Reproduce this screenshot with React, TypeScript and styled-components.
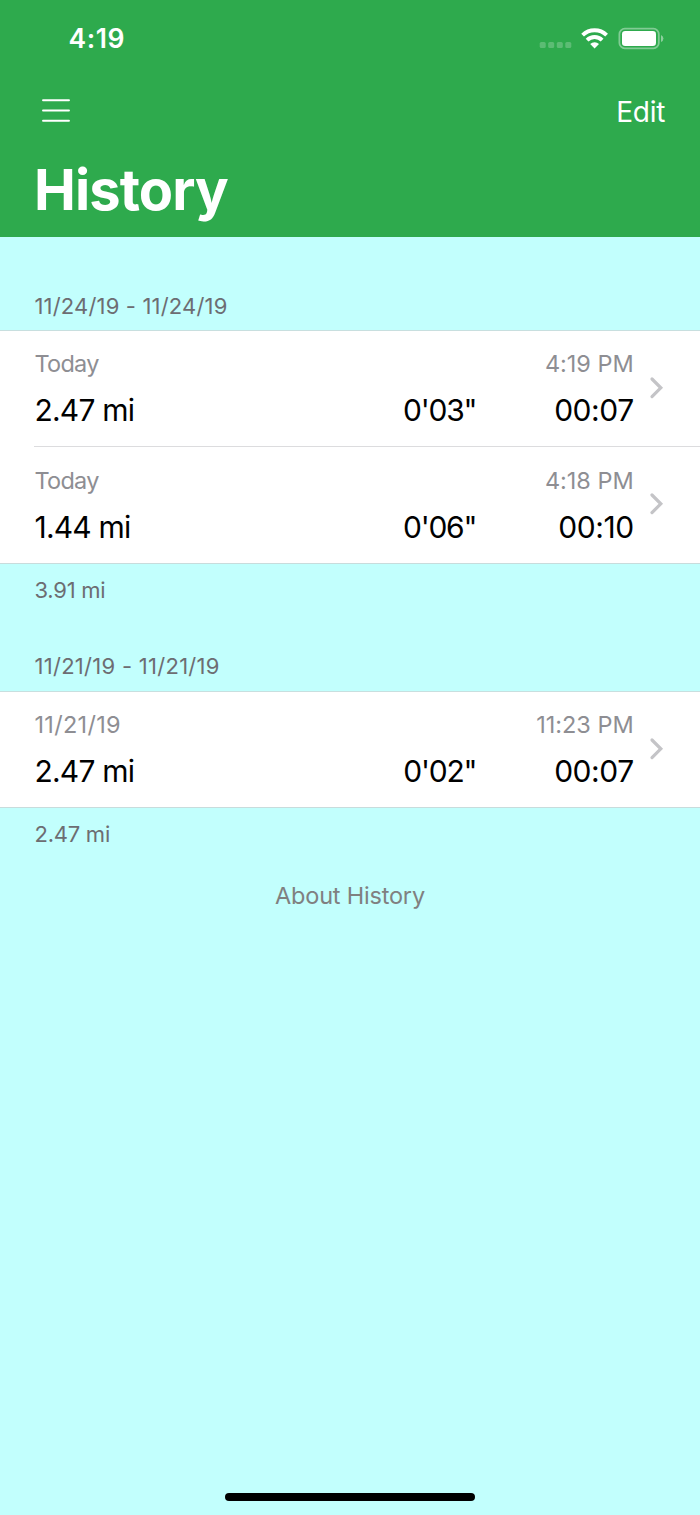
import React from "react";
import styled, { createGlobalStyle } from "styled-components";

const GlobalStyle = createGlobalStyle`
  * { box-sizing: border-box; }
  body { margin: 0; background: #c2fffd; }
`;

const Screen = styled.div`
  display: flex;
  flex-direction: column;
  width: 700px;
  height: 1515px;
  background: #c2fffd;
  font-family: Inter, "Liberation Sans", sans-serif;
  color: #000;
`;

const Header = styled.header`
  height: 237px;
  flex: none;
  background: #2eaa4d;
  color: #fff;
`;

const StatusBar = styled.div`
  display: flex;
  justify-content: space-between;
  height: 76px;
  padding: 0 36px 0 68.5px;
`;

const Clock = styled.span`
  font-size: 26.5px;
  font-weight: 600;
  line-height: 77px;
  letter-spacing: 0.6px;
`;

const StatusIcons = styled.svg`
  display: block;
  width: 126px;
  height: 28px;
  margin-top: 24px;
`;

const NavBar = styled.div`
  display: flex;
  justify-content: space-between;
  align-items: center;
  height: 72px;
  padding: 0 35px 0 42px;
`;

const MenuButton = styled.button`
  width: 28px;
  height: 24px;
  margin: 0 0 2px;
  padding: 0;
  border: 0;
  background: none;
`;

const MenuIcon = styled.svg`
  display: block;
  width: 28px;
  height: 24px;
`;

const EditButton = styled.button`
  padding: 0;
  border: 0;
  background: none;
  color: #fff;
  font: 400 28px/32px Inter, sans-serif;
  letter-spacing: -0.3px;
`;

const Title = styled.h1`
  margin: 0;
  padding-left: 34px;
  font-size: 56px;
  font-weight: 700;
  line-height: 84px;
  letter-spacing: -0.9px;
`;

const Section = styled.section`
  display: flex;
  flex-direction: column;
`;

const SectionHeader = styled.h2<{ $first: boolean }>`
  margin: 0;
  padding: ${(p) => (p.$first ? "55px 0 10px 34.5px" : "48px 0 11px 34.5px")};
  color: #6d6d72;
  font-size: 22px;
  font-weight: 400;
  line-height: 28px;
  letter-spacing: ${(p) => (p.$first ? "0.17px" : "0.28px")};
`;

const SectionFooter = styled.div`
  padding: 12px 0 0 34.5px;
  color: #6d6d72;
  font-size: 22px;
  line-height: 28px;
  letter-spacing: -0.25px;
`;

const Rows = styled.div`
  background: #fff;
  border-top: 1px solid #c8dfdf;
  border-bottom: 1px solid #c8dcdc;
`;

const Row = styled.div`
  display: flex;
  height: 115px;
  padding-left: 34px;

  & + & {
    height: 117px;
  }
`;

const RowBody = styled.div<{ $divided?: boolean }>`
  display: flex;
  flex: 1;
  padding-right: 36px;
  border-top: ${(p) => (p.$divided ? "1px solid #dcdcde" : "0")};
`;

const RowText = styled.div<{ $divided?: boolean }>`
  flex: 1;
  padding: ${(p) => (p.$divided ? "18px" : "17px")} 0 0 0.5px;
`;

const Meta = styled.div`
  display: flex;
  justify-content: space-between;
  height: 32px;
  color: #8e8e93;
  font-size: 23.5px;
  line-height: 32px;
`;

const Day = styled.span<{ $numeric: boolean }>`
  letter-spacing: ${(p) => (p.$numeric ? "0.3px" : "-0.75px")};
`;

const Time = styled.span`
  margin-right: -0.6px;
  letter-spacing: -0.03px;
`;

const Stats = styled.div`
  display: grid;
  grid-template-columns: 1fr 160px 157.5px;
  height: 40px;
  margin: 10px -0.7px 0 0;
  font-size: 30px;
  line-height: 40px;
`;

const Distance = styled.span`
  letter-spacing: -0.8px;
`;

const Pace = styled.span`
  text-align: right;
  letter-spacing: -1.25px;
`;

const Duration = styled.span`
  text-align: right;
  letter-spacing: -0.45px;
`;

const Chevron = styled.svg`
  flex: none;
  width: 16px;
  height: 24px;
  margin: 45.3px 0 0 15px;
`;

const About = styled.div`
  padding-top: 32px;
  text-align: center;
  color: #808080;
  font-size: 23.5px;
  line-height: 32px;
  letter-spacing: -0.2px;
`;

const HomeIndicator = styled.div`
  width: 250px;
  height: 8px;
  margin: auto auto 14px;
  border-radius: 4px;
  background: #000;
`;

interface Run {
  day: string;
  time: string;
  distance: string;
  pace: string;
  duration: string;
}

interface Week {
  range: string;
  total: string;
  runs: Run[];
}

const weeks: Week[] = [
  {
    range: "11/24/19 - 11/24/19",
    total: "3.91 mi",
    runs: [
      { day: "Today", time: "4:19 PM", distance: "2.47 mi", pace: "0'03\"", duration: "00:07" },
      { day: "Today", time: "4:18 PM", distance: "1.44 mi", pace: "0'06\"", duration: "00:10" },
    ],
  },
  {
    range: "11/21/19 - 11/21/19",
    total: "2.47 mi",
    runs: [
      { day: "11/21/19", time: "11:23 PM", distance: "2.47 mi", pace: "0'02\"", duration: "00:07" },
    ],
  },
];

function StatusGlyphs() {
  return (
    <StatusIcons viewBox="538 24 126 28" fill="#fff">
      <g opacity="0.22">
        <rect x="539.7" y="42" width="6" height="6" rx="1.6" />
        <rect x="548.2" y="42" width="6" height="6" rx="1.6" />
        <rect x="556.8" y="42" width="6" height="6" rx="1.6" />
        <rect x="565.3" y="42" width="6" height="6" rx="1.6" />
      </g>
      <g fill="none" stroke="#fff" strokeWidth="3.9">
        <path d="M582.6 35.1 A17.2 17.2 0 0 1 606.6 35.1" />
        <path d="M587.1 40.1 A10.6 10.6 0 0 1 602.1 40.1" />
      </g>
      <path d="M594.6 48.6 L590.2 44.1 A6.2 6.2 0 0 1 599 44.1 Z" />
      <rect x="619.4" y="28.7" width="39.4" height="19.6" rx="5.4" fill="none" stroke="#fff" strokeOpacity="0.4" strokeWidth="1.8" />
      <rect x="622" y="31" width="34" height="15" rx="3.2" />
      <path d="M661 35 Q663.4 36 663.4 38.5 Q663.4 41 661 42 Z" opacity="0.45" />
    </StatusIcons>
  );
}

function RunRow({ run, divided }: { run: Run; divided: boolean }) {
  return (
    <Row>
      <RowBody $divided={divided}>
        <RowText $divided={divided}>
          <Meta>
            <Day $numeric={/^\d/.test(run.day)}>{run.day}</Day>
            <Time>{run.time}</Time>
          </Meta>
          <Stats>
            <Distance>{run.distance}</Distance>
            <Pace>{run.pace}</Pace>
            <Duration>{run.duration}</Duration>
          </Stats>
        </RowText>
        <Chevron viewBox="0 0 16 24" fill="none" stroke="#c4c4c7" strokeWidth="3.2" strokeLinecap="round" strokeLinejoin="miter">
          <path d="M4 3 L12.8 11.8 L4 20.6" />
        </Chevron>
      </RowBody>
    </Row>
  );
}

export default function App() {
  return (
    <>
      <GlobalStyle />
      <Screen>
        <Header>
          <StatusBar>
            <Clock>4:19</Clock>
            <StatusGlyphs />
          </StatusBar>
          <NavBar>
            <MenuButton aria-label="Menu">
              <MenuIcon viewBox="0 0 28 24" stroke="#fff" strokeWidth="1.9" strokeLinecap="round">
                <path d="M1 1.2H27M1 11.5H27M1 21.7H27" />
              </MenuIcon>
            </MenuButton>
            <EditButton>Edit</EditButton>
          </NavBar>
          <Title>History</Title>
        </Header>
        {weeks.map((week, i) => (
          <Section key={week.range}>
            <SectionHeader $first={i === 0}>{week.range}</SectionHeader>
            <Rows>
              {week.runs.map((run, j) => (
                <RunRow key={run.time} run={run} divided={j > 0} />
              ))}
            </Rows>
            <SectionFooter>{week.total}</SectionFooter>
          </Section>
        ))}
        <About>About History</About>
        <HomeIndicator />
      </Screen>
    </>
  );
}
